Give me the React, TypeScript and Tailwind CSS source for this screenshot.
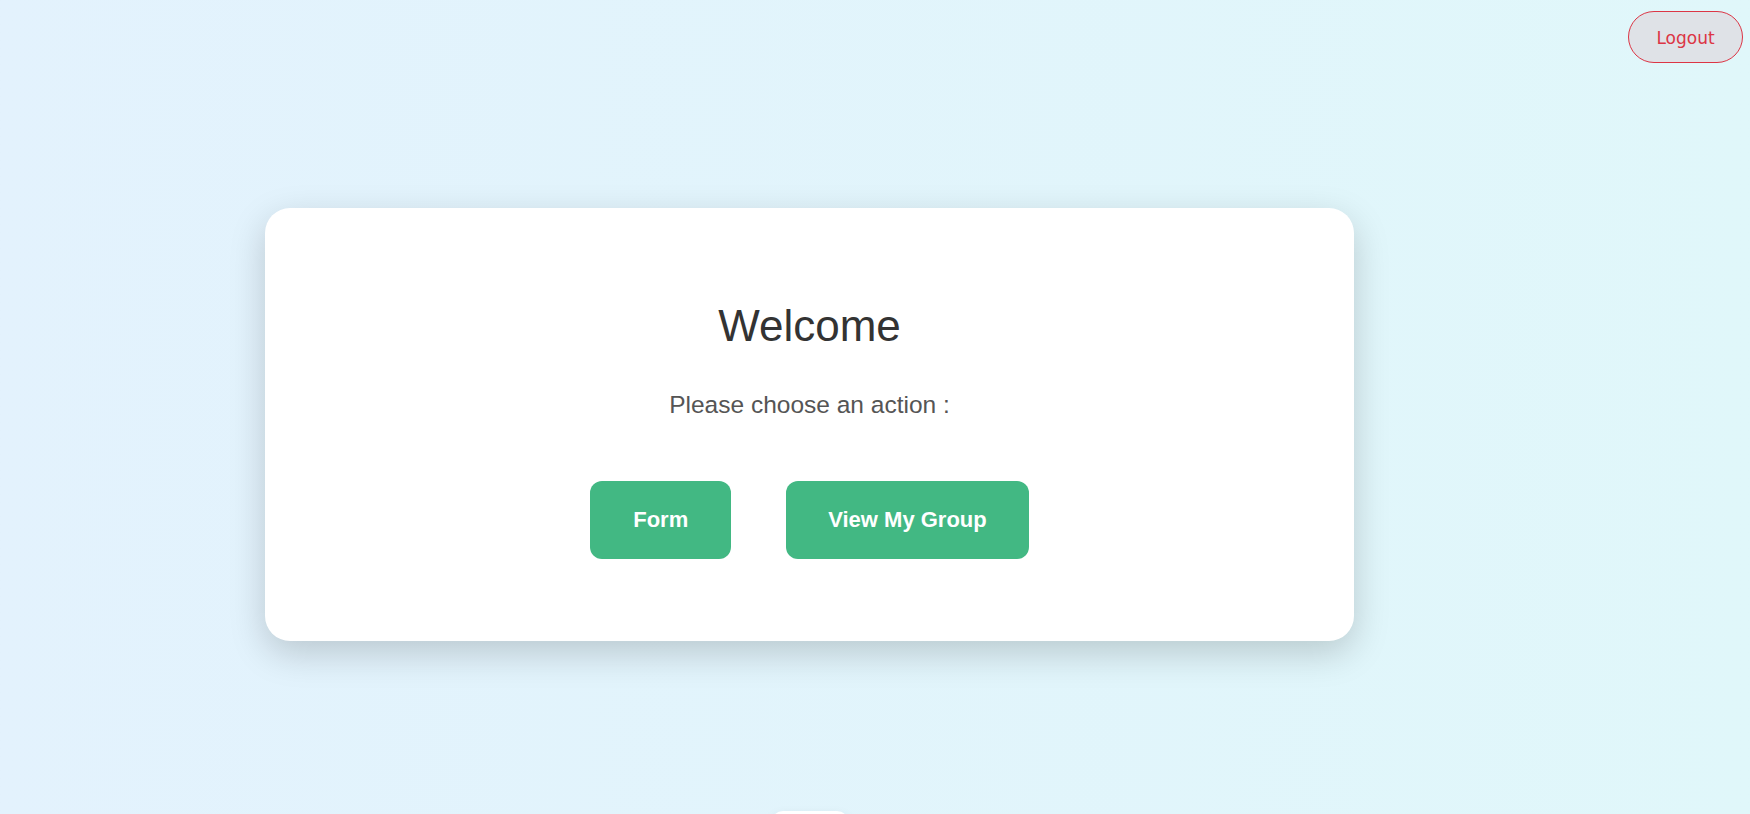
export default function App() {
  return (
    <div
      className="flex h-screen w-full overflow-hidden bg-linear-to-r from-[#e3f2fd] to-[#e0f7fa]"
      style={{ fontFamily: '"Liberation Sans", Arial, sans-serif' }}
    >
      {/* Main column */}
      <main className="flex flex-1 flex-col items-center pt-[208px]">
        <section className="flex w-[1089px] flex-col items-center rounded-[25px] bg-white pt-[92px] pb-[82px] shadow-[0_12px_36px_rgba(0,0,0,0.18)]">
          <h1 className="text-[44px] leading-[51px] font-normal text-[#333]">Welcome</h1>
          <p className="mt-[40px] text-[24.5px] leading-[28px] text-[#555]">Please choose an action :</p>
          <div className="mt-[62px] flex gap-[55px]">
            <button className="rounded-[12px] bg-[#42b883] px-[43px] py-[27px] text-[22px] leading-[24px] font-bold text-white">
              Form
            </button>
            <button className="rounded-[12px] bg-[#42b883] px-[42px] py-[27px] text-[22px] leading-[24px] font-bold text-white">
              View My Group
            </button>
          </div>
        </section>
        <div className="mt-[170px] h-[40px] w-[78px] shrink-0 rounded-t-[12px] bg-white shadow-[0_4px_12px_rgba(0,0,0,0.08)]" />
      </main>

      {/* Logout */}
      <aside className="pt-[11px] pr-[7px] pl-[9px]">
        <button
          className="h-[52px] w-[115px] rounded-full border border-[#dc3545] bg-[#dfe2e7] pt-[3px] text-[17px] text-[#dc3545]"
          style={{ fontFamily: '"DejaVu Sans", sans-serif' }}
        >
          Logout
        </button>
      </aside>
    </div>
  )
}
